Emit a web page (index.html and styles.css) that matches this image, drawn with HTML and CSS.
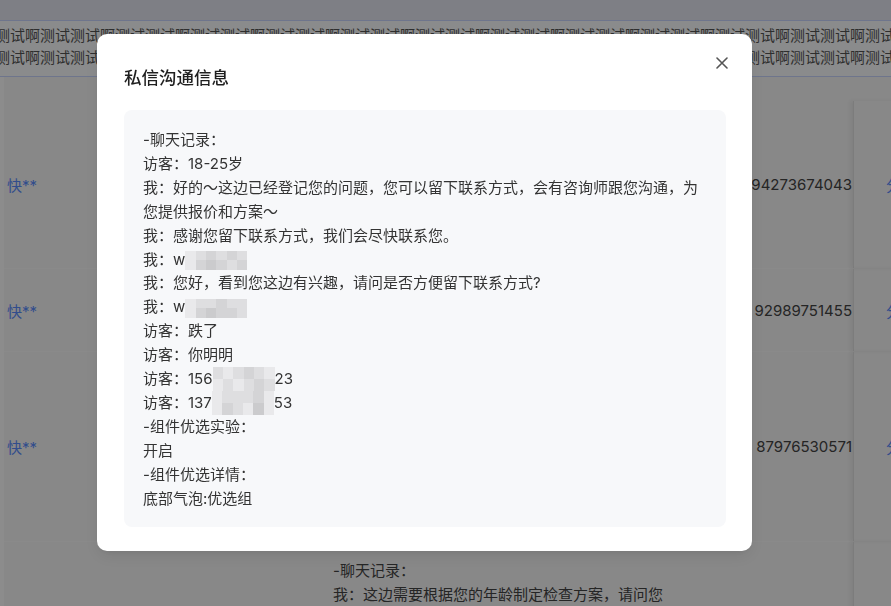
FILE: index.html
```html
<!DOCTYPE html>
<html lang="zh-CN">
<head>
<meta charset="utf-8">
<title>私信沟通信息</title>
<link rel="stylesheet" href="styles.css">
</head>
<body>
<div class="page">
  <div class="topbar"></div>
  <div class="band">
    <div class="band-line">测试啊测试测试啊测试测试啊测试测试啊测试测试啊测试测试啊测试测试啊测试测试啊测试测试啊测试测试啊测试测试啊测试测试啊测试测试啊</div>
    <div class="band-line">测试啊测试测试啊测试测试啊测试测试啊测试测试啊测试测试啊测试测试啊测试测试啊测试测试啊测试测试啊测试测试啊测试测试啊测试测试啊</div>
  </div>
  <div class="rows">
    <div class="row r1">
      <div class="c-name"><span class="link">快**</span></div>
      <div class="c-chat"></div>
      <div class="c-gap"></div>
      <div class="c-num">94273674043</div>
      <div class="c-fix"><span class="link">分配</span></div>
    </div>
    <div class="row r2">
      <div class="c-name"><span class="link">快**</span></div>
      <div class="c-chat"></div>
      <div class="c-gap"></div>
      <div class="c-num">92989751455</div>
      <div class="c-fix"><span class="link">分配</span></div>
    </div>
    <div class="row r3">
      <div class="c-name"><span class="link">快**</span></div>
      <div class="c-chat"></div>
      <div class="c-gap"></div>
      <div class="c-num">87976530571</div>
      <div class="c-fix"><span class="link">分配</span></div>
    </div>
    <div class="row r4">
      <div class="c-name"></div>
      <div class="c-chat">
        <div>-聊天记录：</div>
        <div>我：这边需要根据您的年龄制定检查方案，请问您的年龄是多少呢？</div>
      </div>
      <div class="c-gap"></div>
      <div class="c-num"></div>
      <div class="c-fix"></div>
    </div>
  </div>
</div>

<div class="mask"></div>

<div class="modal" role="dialog">
  <button class="close" aria-label="关闭">
    <svg width="12" height="12" viewBox="0 0 12 12"><path d="M1 1 L11 11 M11 1 L1 11" stroke="#555" stroke-width="1.6" stroke-linecap="round" fill="none"/></svg>
  </button>
  <div class="title">私信沟通信息</div>
  <div class="content">
    <div>-聊天记录：</div>
    <div>访客：18-25岁</div>
    <div>我：好的～这边已经登记您的问题，您可以留下联系方式，会有咨询师跟您沟通，为您提供报价和方案～</div>
    <div>我：感谢您留下联系方式，我们会尽快联系您。</div>
    <div>我：w<span class="mosaic mw"><i class="a"></i><i class="b"></i><i class="c"></i><i class="b"></i><i class="c"></i><i class="b"></i><i class="a"></i><i class="c"></i><i class="d"></i><i class="c"></i><i class="b"></i><i class="c"></i></span></div>
    <div>我：您好，看到您这边有兴趣，请问是否方便留下联系方式?</div>
    <div>我：w<span class="mosaic mw"><i class="a"></i><i class="b"></i><i class="b"></i><i class="c"></i><i class="b"></i><i class="b"></i><i class="a"></i><i class="c"></i><i class="d"></i><i class="c"></i><i class="c"></i><i class="b"></i></span></div>
    <div>访客：跌了</div>
    <div>访客：你明明</div>
    <div>访客：156<span class="mosaic mp"><i class="b"></i><i class="a"></i><i class="b"></i><i class="c"></i><i class="b"></i><i class="a"></i><i class="a"></i><i class="b"></i><i class="a"></i><i class="b"></i><i class="c"></i><i class="b"></i></span>23</div>
    <div>访客：137<span class="mosaic mp"><i class="a"></i><i class="b"></i><i class="b"></i><i class="b"></i><i class="c"></i><i class="a"></i><i class="a"></i><i class="c"></i><i class="b"></i><i class="a"></i><i class="d"></i><i class="a"></i></span>53</div>
    <div>-组件优选实验：</div>
    <div>开启</div>
    <div>-组件优选详情：</div>
    <div>底部气泡:优选组</div>
  </div>
</div>
</body>
</html>
```

FILE: styles.css
```css
html, body {
  margin: 0;
  padding: 0;
}
body {
  width: 891px;
  height: 606px;
  overflow: hidden;
  background: #ffffff;
  font-family: "Inter", "Noto Sans CJK SC", sans-serif;
  font-size: 15px;
  color: #444;
}

.page {
  width: 960px;
}

.topbar {
  height: 20px;
  background: #e6e8f3;
}

.band {
  height: 52px;
  border-top: 1px solid #c8d6ff;
  border-bottom: 1px solid #c8d6ff;
  background: #fcfdff;
  padding-top: 3px;
  box-sizing: content-box;
  overflow: hidden;
  font-family: "Noto Sans CJK SC", sans-serif;
  color: #555;
}
.band-line {
  white-space: nowrap;
  line-height: 22px;
  margin-left: -5px;
}

.rows {
  margin-left: 4px;
  background: #f7f7f7;
}

.row {
  display: grid;
  grid-template-columns: 329px 340px 60px 120px 107px;
  align-items: center;
  border-bottom: 1px solid #fbfbfb;
  box-sizing: border-box;
}
.r1 { height: 192px; padding-top: 24px; }
.r2 { height: 83px; }
.r3 { height: 190px; }
.r4 { height: 80px; align-items: start; border-bottom: 0; }

.c-name {
  padding-left: 3px;
}
.link {
  color: #5a8cff;
}
.c-chat {
  line-height: 23.9px;
}
.r4 .c-chat {
  padding-top: 17px;
}
.c-num {
  text-align: right;
  padding-right: 1px;
  color: #444;
}
.c-fix {
  align-self: stretch;
  display: flex;
  align-items: center;
  padding-left: 32px;
  border-left: 1px solid #e2e2e2;
  box-shadow: -3px 0 4px rgba(0, 0, 0, 0.05);
}
.r4 .c-fix { align-items: start; }

.mask {
  position: fixed;
  inset: 0;
  background: rgba(0, 0, 0, 0.45);
}

.modal {
  position: fixed;
  left: 97px;
  top: 34px;
  width: 655px;
  height: 517px;
  box-sizing: border-box;
  padding: 31px 26px 25px 27px;
  background: #ffffff;
  border-radius: 10px;
  box-shadow: 0 6px 16px rgba(0, 0, 0, 0.08), 0 3px 6px -4px rgba(0, 0, 0, 0.12);
  display: flex;
  flex-direction: column;
}

.close {
  position: absolute;
  top: 23px;
  right: 24px;
  width: 12px;
  height: 12px;
  padding: 0;
  border: 0;
  background: transparent;
  display: flex;
}

.title {
  font-family: "Noto Sans CJK SC", sans-serif;
  font-size: 17.5px;
  font-weight: 500;
  line-height: 24px;
  color: #1f1f1f;
  margin-bottom: 21px;
}

.content {
  flex: 1;
  background: #f7f8fa;
  border-radius: 8px;
  padding: 18px 19px 16px 19px;
  color: #333;
  line-height: 23.9px;
}

.mosaic {
  display: inline-grid;
  grid-template-columns: repeat(6, 1fr);
  width: 62px;
}
.mosaic i {
  display: block;
}
.mw {
  height: 19px;
  vertical-align: middle;
  grid-template-rows: repeat(2, 1fr);
}
.mp {
  height: 23.9px;
  vertical-align: top;
  grid-template-rows: repeat(2, 1fr);
}
.mosaic .a { background: #e9e9eb; }
.mosaic .b { background: #dedee0; }
.mosaic .c { background: #d4d4d6; }
.mosaic .d { background: #cbcbcd; }
```
